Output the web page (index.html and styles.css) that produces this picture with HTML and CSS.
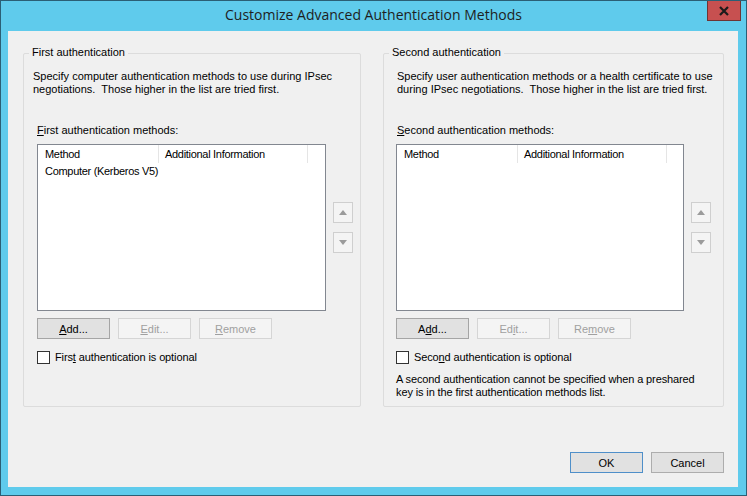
FILE: index.html
```html
<!DOCTYPE html>
<html>
<head>
<meta charset="utf-8">
<title>Customize Advanced Authentication Methods</title>
<link rel="stylesheet" href="styles.css">
</head>
<body>
<div class="window">
  <div class="titlebar">
    <span class="title">Customize Advanced Authentication Methods</span>
    <button class="close" aria-label="Close">
      <svg width="12" height="10" viewBox="0 0 12 10"><path d="M2 1 L10 9 M10 1 L2 9" stroke="#1a1a1a" stroke-width="2.2" fill="none"/></svg>
    </button>
  </div>
  <div class="client">
    <div class="groups">
      <section class="group group-first">
        <span class="legend">First authentication</span>
        <p class="desc desc-first">Specify computer authentication methods to use during IPsec<br>negotiations.&nbsp; Those higher in the list are tried first.</p>
        <div class="label"><u>F</u>irst authentication methods:</div>
        <div class="list-row">
          <div class="listbox lb-first">
            <div class="lv-header">
              <div class="lv-col lv-col1">Method</div>
              <div class="lv-col lv-col2">Additional Information</div>
            </div>
            <div class="lv-row">Computer (Kerberos V5)</div>
          </div>
          <div class="arrows">
            <button class="arrow" disabled aria-label="Move up"><svg width="8" height="5" viewBox="0 0 8 5"><path d="M0 5 L4 0 L8 5 Z" fill="#9b9b9b"/></svg></button>
            <button class="arrow" disabled aria-label="Move down"><svg width="8" height="5" viewBox="0 0 8 5"><path d="M0 0 L8 0 L4 5 Z" fill="#9b9b9b"/></svg></button>
          </div>
        </div>
        <div class="btn-row">
          <button class="btn btn-focus"><u>A</u>dd...</button>
          <button class="btn" disabled><u>E</u>dit...</button>
          <button class="btn" disabled><u>R</u>emove</button>
        </div>
        <label class="check-row"><span class="checkbox"></span><span>Firs<u>t</u> authentication is optional</span></label>
      </section>
      <section class="group group-second">
        <span class="legend">Second authentication</span>
        <p class="desc desc-second">Specify user authentication methods or a health certificate to use<br>during IPsec negotiations.&nbsp; Those higher in the list are tried first.</p>
        <div class="label label-second"><u>S</u>econd authentication methods:</div>
        <div class="list-row">
          <div class="listbox lb-second">
            <div class="lv-header">
              <div class="lv-col lv-col1">Method</div>
              <div class="lv-col lv-col2">Additional Information</div>
            </div>
          </div>
          <div class="arrows">
            <button class="arrow" disabled aria-label="Move up"><svg width="8" height="5" viewBox="0 0 8 5"><path d="M0 5 L4 0 L8 5 Z" fill="#9b9b9b"/></svg></button>
            <button class="arrow" disabled aria-label="Move down"><svg width="8" height="5" viewBox="0 0 8 5"><path d="M0 0 L8 0 L4 5 Z" fill="#9b9b9b"/></svg></button>
          </div>
        </div>
        <div class="btn-row">
          <button class="btn btn-focus">A<u>d</u>d...</button>
          <button class="btn" disabled>Ed<u>i</u>t...</button>
          <button class="btn" disabled>Re<u>m</u>ove</button>
        </div>
        <label class="check-row"><span class="checkbox"></span><span>Seco<u>n</u>d authentication is optional</span></label>
        <p class="note">A second authentication cannot be specified when a preshared<br>key is in the first authentication methods list.</p>
      </section>
    </div>
    <div class="footer">
      <button class="btn btn-default">OK</button>
      <button class="btn">Cancel</button>
    </div>
  </div>
</div>
</body>
</html>
```
FILE: styles.css
```css
* { box-sizing: border-box; }
html, body { margin: 0; padding: 0; }
body {
  width: 747px;
  height: 496px;
  overflow: hidden;
  font-family: "Liberation Sans", Arial, sans-serif;
  font-size: 11px;
  color: #000;
}
.window {
  width: 747px;
  height: 496px;
  background: #5fcbec;
  border: 1px solid #2b5f75;
  display: flex;
  flex-direction: column;
}
.titlebar {
  height: 30px;
  flex: none;
  display: grid;
  grid-template-columns: 1fr auto 1fr;
  align-items: start;
}
.title {
  grid-column: 2;
  font-family: "Open Sans", "Noto Sans", sans-serif;
  font-size: 14px;
  line-height: 28px;
  color: #1e1e1e;
  white-space: nowrap;
}
.close {
  grid-column: 3;
  justify-self: end;
  width: 34px;
  height: 20px;
  margin-right: 5px;
  padding: 0;
  background: #c75050;
  border: 1px solid #6e3434;
  border-top: 0;
  display: flex;
  align-items: center;
  justify-content: center;
}
.client {
  flex: 1;
  margin: 0 8px 8px 7px;
  background: #f0f0f0;
  padding: 22px 14px 14px 15px;
  display: flex;
  flex-direction: column;
}
.groups {
  display: grid;
  grid-template-columns: 338px 341px;
  column-gap: 22px;
}
.group {
  position: relative;
  height: 354px;
  border: 1px solid #dcdcdc;
  border-radius: 2px;
  padding: 16px 0 0 13px;
}
.group-second { padding-left: 12px; }
.legend {
  position: absolute;
  top: -8px;
  left: 5px;
  padding: 0 3px;
  background: #f0f0f0;
  line-height: 13px;
}
.desc, .note {
  margin: 0;
  line-height: 13px;
}
.desc-first { margin-left: -4px; }
.desc-second { margin-left: 1px; }
.label {
  margin-top: 28px;
  margin-bottom: 7px;
  line-height: 13px;
}
.label-second { margin-left: 1px; }
.list-row {
  display: flex;
  gap: 7px;
}
.listbox {
  height: 167px;
  background: #fff;
  border: 1px solid #828790;
  letter-spacing: -0.3px;
}
.lb-first { width: 289px; }
.lb-second { width: 288px; }
.lv-header {
  display: flex;
  height: 18px;
}
.lv-col {
  padding-left: 7px;
  line-height: 18px;
  border-right: 1px solid #e5e5e5;
  white-space: nowrap;
}
.lv-col1 { width: 121px; }
.lv-col2 { width: 149px; padding-left: 6px; }
.lv-row {
  padding-left: 7px;
  line-height: 17px;
}
.arrows {
  display: flex;
  flex-direction: column;
  justify-content: center;
  gap: 9px;
}
.arrow {
  width: 20px;
  height: 21px;
  padding: 0;
  background: #f4f4f4;
  border: 1px solid #cfcfcf;
  display: flex;
  align-items: center;
  justify-content: center;
}
.btn-row {
  display: flex;
  gap: 8px;
  margin-top: 7px;
}
.btn {
  width: 73px;
  height: 21px;
  padding: 0;
  font-family: inherit;
  font-size: 11px;
  color: #000;
  background: #e1e1e1;
  border: 1px solid #adadad;
}
.btn[disabled] {
  background: #f4f4f4;
  border-color: #d5d5d5;
  color: #a0a0a0;
}
.btn-focus { background: #e1e1e1; border-color: #a5a5a5; }
.btn-default { border-color: #4f8fc9; }
.check-row {
  display: flex;
  align-items: center;
  gap: 5px;
  margin-top: 12px;
  line-height: 13px;
  letter-spacing: -0.12px;
}
.checkbox {
  width: 13px;
  height: 13px;
  background: #fff;
  border: 1px solid #333;
}
.note {
  margin-top: 9px;
  letter-spacing: -0.12px;
}
.footer {
  margin-top: auto;
  display: flex;
  justify-content: flex-end;
  gap: 8px;
}
.footer .btn { width: 73px; }
```
